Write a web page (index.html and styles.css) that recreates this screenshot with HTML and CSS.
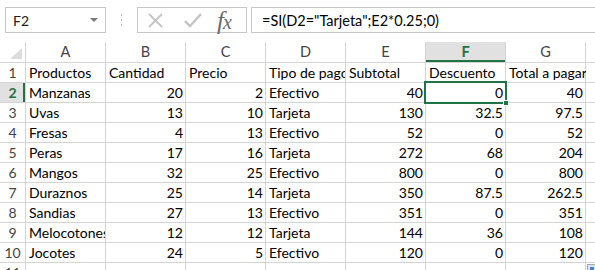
FILE: index.html
```html
<!DOCTYPE html>
<html lang="es">
<head>
  <meta charset="UTF-8">
  <title>Libro1</title>
  <link rel="stylesheet" href="styles.css">
</head>
<body>

  <div class="toolbar">
    <div class="namebox">
      <span>F2</span>
      <svg width="8" height="5" viewBox="0 0 8 5"><path d="M0 0h8L4 4z" fill="#7a7a7a"/></svg>
    </div>
    <div class="grip">
      <svg width="3" height="13" viewBox="0 0 3 13"><rect x="1" y="0" width="1" height="2" fill="#b5b5b5"/><rect x="1" y="5" width="1" height="2" fill="#b5b5b5"/><rect x="1" y="10" width="1" height="2" fill="#b5b5b5"/></svg>
    </div>
    <div class="fxbox">
      <svg class="ico" width="16" height="16" viewBox="0 0 16 16"><path d="M2 2L15 15M15 2L2 15" stroke="#c4c4c4" stroke-width="1.8" fill="none"/></svg>
      <svg class="ico" width="18" height="16" viewBox="0 0 18 16"><path d="M1 9l5 5L17 2" stroke="#c4c4c4" stroke-width="2.4" fill="none"/></svg>
      <span class="fx">f<span>x</span></span>
    </div>
    <div class="formula">=SI(D2="Tarjeta";E2*0.25;0)</div>
  </div>

  <div class="sheet">
    <div class="corner"><svg width="12" height="11" viewBox="0 0 12 11"><path d="M12 0v11H0z" fill="#dcdcdc"/></svg></div>
    <div class="h">A</div><div class="h">B</div><div class="h">C</div><div class="h">D</div><div class="h">E</div><div class="h sel">F</div><div class="h">G</div><div class="h"></div>

    <div class="rn">1</div>
    <div class="c">Productos</div><div class="c">Cantidad</div><div class="c">Precio</div><div class="c">Tipo de pago</div><div class="c">Subtotal</div><div class="c">Descuento</div><div class="c over">Total a pagar</div><div class="c"></div>

    <div class="rn sel">2</div>
    <div class="c">Manzanas</div><div class="c n">20</div><div class="c n">2</div><div class="c">Efectivo</div><div class="c n">40</div><div class="c n active">0</div><div class="c n">40</div><div class="c"></div>

    <div class="rn">3</div>
    <div class="c">Uvas</div><div class="c n">13</div><div class="c n">10</div><div class="c">Tarjeta</div><div class="c n">130</div><div class="c n">32.5</div><div class="c n">97.5</div><div class="c"></div>

    <div class="rn">4</div>
    <div class="c">Fresas</div><div class="c n">4</div><div class="c n">13</div><div class="c">Efectivo</div><div class="c n">52</div><div class="c n">0</div><div class="c n">52</div><div class="c"></div>

    <div class="rn">5</div>
    <div class="c">Peras</div><div class="c n">17</div><div class="c n">16</div><div class="c">Tarjeta</div><div class="c n">272</div><div class="c n">68</div><div class="c n">204</div><div class="c"></div>

    <div class="rn">6</div>
    <div class="c">Mangos</div><div class="c n">32</div><div class="c n">25</div><div class="c">Efectivo</div><div class="c n">800</div><div class="c n">0</div><div class="c n">800</div><div class="c"></div>

    <div class="rn">7</div>
    <div class="c">Duraznos</div><div class="c n">25</div><div class="c n">14</div><div class="c">Tarjeta</div><div class="c n">350</div><div class="c n">87.5</div><div class="c n">262.5</div><div class="c"></div>

    <div class="rn">8</div>
    <div class="c">Sandias</div><div class="c n">27</div><div class="c n">13</div><div class="c">Efectivo</div><div class="c n">351</div><div class="c n">0</div><div class="c n">351</div><div class="c"></div>

    <div class="rn">9</div>
    <div class="c">Melocotones</div><div class="c n">12</div><div class="c n">12</div><div class="c">Tarjeta</div><div class="c n">144</div><div class="c n">36</div><div class="c n">108</div><div class="c"></div>

    <div class="rn">10</div>
    <div class="c">Jocotes</div><div class="c n">24</div><div class="c n">5</div><div class="c">Efectivo</div><div class="c n">120</div><div class="c n">0</div><div class="c n">120</div><div class="c"></div>

    <div class="rn">11</div>
    <div class="c"></div><div class="c"></div><div class="c"></div><div class="c"></div><div class="c"></div><div class="c"></div><div class="c"></div><div class="c qa"><span></span></div>
  </div>

</body>
</html>
```

FILE: styles.css
```css
body {
  margin: 0;
  width: 595px;
  height: 270px;
  overflow: hidden;
  background: #fff;
  font-family: Lato, "Liberation Sans", sans-serif;
  font-size: 14px;
  color: #000;
}
.toolbar {
  display: flex;
  height: 26px;
  margin-top: 7px;
}
.namebox {
  box-sizing: border-box;
  width: 101px;
  margin-left: 5px;
  border: 1px solid #c6c6c6;
  display: flex;
  align-items: center;
  justify-content: space-between;
  padding: 0 7px 0 7px;
  color: #222;
}
.grip {
  width: 31px;
  display: flex;
  align-items: center;
  justify-content: center;
}
.fxbox {
  box-sizing: border-box;
  width: 110px;
  border: 1px solid #c6c6c6;
  display: flex;
  align-items: center;
  padding-left: 9px;
}
.fxbox .ico {
  margin-right: 21px;
}
.fxbox .ico + .ico {
  margin-right: 15px;
}
.fx {
  font-family: "Liberation Serif", serif;
  font-style: italic;
  font-size: 25px;
  color: #6a6a6a;
  line-height: 1;
  letter-spacing: -1px;
}
.fx span {
  font-size: 20px;
}
.formula {
  flex: 1;
  margin-left: 4px;
  border: 1px solid #c6c6c6;
  border-right: none;
  padding-left: 10px;
  display: flex;
  align-items: center;
  white-space: nowrap;
  font-size: 14.5px;
}
.sheet {
  margin-top: 9px;
  display: grid;
  grid-template-columns: 25px repeat(7, 79px) 1fr;
  grid-template-rows: 20px;
  grid-auto-rows: 19px;
  gap: 1px;
  background: #d4d4d4;
}
.corner {
  background: #fff;
  display: flex;
  align-items: flex-end;
  justify-content: flex-end;
  padding: 0 3px 3px 0;
}
.h {
  background: #fff;
  text-align: center;
  line-height: 20px;
  color: #444;
  font-size: 14.5px;
}
.h.sel {
  background: #e1e1e1;
  color: #217346;
  font-weight: bold;
  box-shadow: inset 0 -2px #217346;
}
.rn {
  background: #fff;
  text-align: center;
  line-height: 19px;
  color: #444;
}
.rn.sel {
  background: #e1e1e1;
  color: #217346;
  font-weight: bold;
  box-shadow: inset -2px 0 #217346;
}
.c {
  background: #fff;
  padding: 0 2px 0 3px;
  line-height: 19px;
  white-space: nowrap;
  overflow: hidden;
}
.c.over {
  overflow: visible;
}
.n {
  text-align: right;
}
.active {
  position: relative;
  overflow: visible;
  outline: 2px solid #217346;
}
.active::after {
  content: "";
  position: absolute;
  right: -4px;
  bottom: -4px;
  width: 4px;
  height: 4px;
  background: #217346;
  border: 1px solid #fff;
}
.qa {
  padding: 0;
}
.qa span {
  display: block;
  box-sizing: border-box;
  width: 9px;
  height: 9px;
  margin: 1px 0 0 1px;
  border: 1px solid #a8a8a8;
  background: linear-gradient(#4a7fd0, #4a7fd0) 2px 2px / 4px 4px no-repeat #dbe6f6;
}
```
